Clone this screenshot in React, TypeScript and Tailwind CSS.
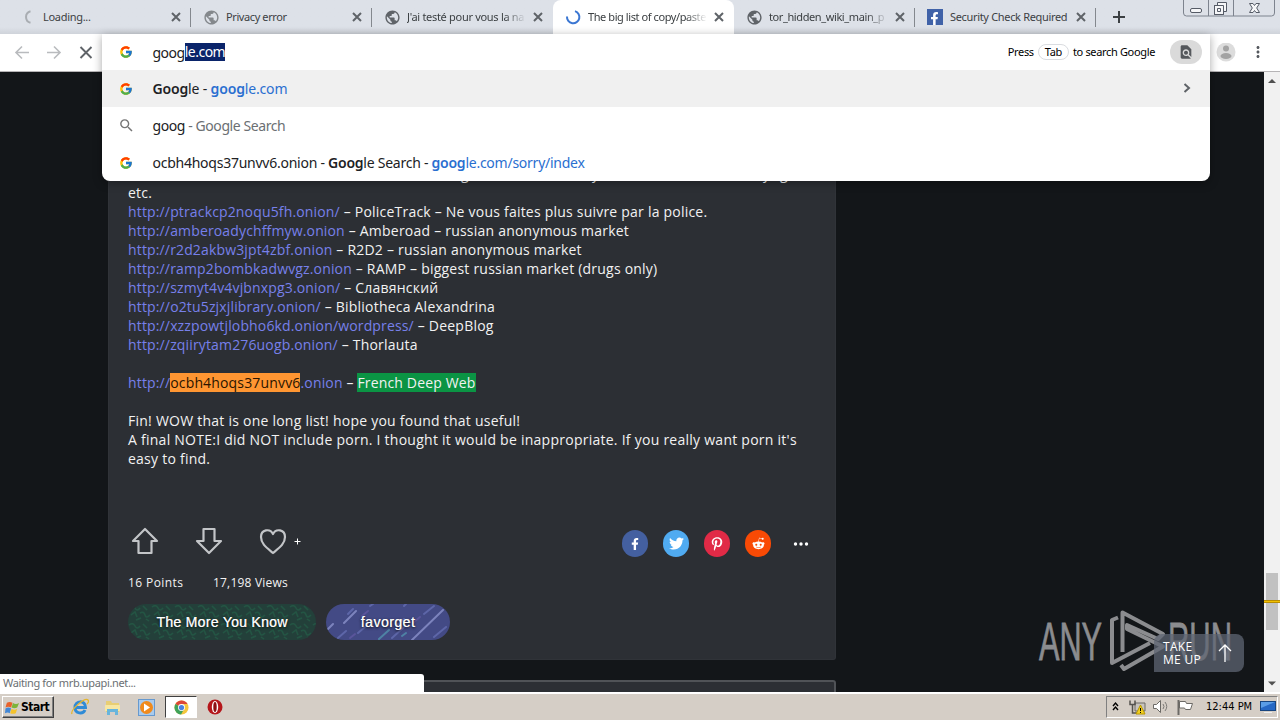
import type { ReactNode } from "react"
import clsx from "clsx"
import { FcGoogle } from "react-icons/fc"
import { FaFacebookF, FaPinterestP, FaRedditAlien, FaTwitter } from "react-icons/fa"
import { MdFindInPage, MdMoreVert, MdPublic, MdSearch } from "react-icons/md"

const UI = "font-['Noto_Sans','Open_Sans',sans-serif]"
const TAHOMA = "font-['DejaVu_Sans_Condensed','DejaVu_Sans',sans-serif]"

const TABS = [
  { icon: "wait", title: "Loading...", track: "tracking-[-0.3px]", dim: true },
  { icon: "globe", title: "Privacy error", track: "tracking-[-0.4px]", dim: true },
  { icon: "globe", title: "J'ai testé pour vous la na", track: "tracking-[-0.3px]", fade: true },
  { icon: "spin", title: "The big list of copy/paste", track: "tracking-[-0.42px]", fade: true, active: true },
  { icon: "globe", title: "tor_hidden_wiki_main_p", track: "tracking-[-0.4px]", fade: true },
  { icon: "fb", title: "Security Check Required", track: "tracking-[-0.33px]" },
]

const LINKS = [
  { url: "http://ptrackcp2noqu5fh.onion/", text: "PoliceTrack – Ne vous faites plus suivre par la police." },
  { url: "http://amberoadychffmyw.onion", text: "Amberoad – russian anonymous market" },
  { url: "http://r2d2akbw3jpt4zbf.onion", text: "R2D2 – russian anonymous market" },
  { url: "http://ramp2bombkadwvgz.onion", text: "RAMP – biggest russian market (drugs only)" },
  { url: "http://szmyt4v4vjbnxpg3.onion/", text: "Славянский" },
  { url: "http://o2tu5zjxjlibrary.onion/", text: "Bibliotheca Alexandrina" },
  { url: "http://xzzpowtjlobho6kd.onion/wordpress/", text: "DeepBlog" },
  { url: "http://zqiirytam276uogb.onion/", text: "Thorlauta" },
]

const SHARES = [
  { name: "facebook", bg: "bg-[#4460a0]", icon: <FaFacebookF size={12} /> },
  { name: "twitter", bg: "bg-[#50abf1]", icon: <FaTwitter size={15} /> },
  { name: "pinterest", bg: "bg-[#e12a46]", icon: <FaPinterestP size={14} /> },
  { name: "reddit", bg: "bg-[#f94a05]", icon: <FaRedditAlien size={13} /> },
]

function TabIcon({ type, dim }: { type: string; dim?: boolean }) {
  if (type === "globe")
    return <MdPublic size={17} className={clsx("-mr-px shrink-0", dim ? "text-[#84888c]" : "text-[#5f6368]")} />
  if (type === "fb")
    return (
      <span className="flex w-4 h-4 items-end justify-end bg-[#4062a8] pr-[2px] text-white">
        <FaFacebookF size={13} />
      </span>
    )
  return (
    <svg className={clsx("shrink-0", type === "wait" && "-ml-[2px]")} width="16" height="16" fill="none" strokeWidth="2">
      {type === "wait" ? (
        <path d="M10.500 2.200A6 6 0 0 0 10.500 13.800" stroke="#a9adb2" />
      ) : (
        <path d="M2 7.500A6.200 6.200 0 1 0 10 2.100" stroke="#3a76d2" />
      )}
    </svg>
  )
}

function Tab({ tab, divider }: { tab: (typeof TABS)[number]; divider: boolean }) {
  return (
    <div
      className={clsx(
        "relative flex h-full w-[181px] shrink-0 items-center justify-between pl-3 pr-[10px]",
        tab.active && "rounded-t-lg bg-white"
      )}
    >
      <TabIcon type={tab.icon} dim={tab.dim} />
      <div
        className={clsx(
          "ml-[7px] mr-auto w-[119px] overflow-hidden whitespace-nowrap text-[11px] text-[#3c4043]",
          tab.track,
          tab.fade && "[mask-image:linear-gradient(to_right,black_82%,transparent)]"
        )}
      >
        {tab.title}
      </div>
      <svg className="shrink-0" width="10" height="10" stroke="#5f6368" strokeWidth="2">
        <path d="M1 1l8 8M9 1L1 9" />
      </svg>
      {divider && <span className="absolute right-0 top-2 h-[19px] w-px bg-[#84888e]" />}
    </div>
  )
}

function WindowControls() {
  return (
    <svg className="absolute right-[4px] top-0" width="94" height="17" fill="none" stroke="#7d838e">
      <path d="M1.5 0v13q0 3 3 3h85q3 0 3-3V0M26.5 0v16M51.5 0v16" />
      <rect x="8.500" y="8.500" width="11" height="4" rx="1.500" fill="#f5f6f8" stroke="#555b66" />
      <path d="M35.500 2.500h9v9h-3v3h-9v-9h3z" fill="#f5f6f8" stroke="#555b66" />
      <path d="M32.500 5.500h9v9h-9zM35.500 8.500h3v3h-3z" stroke="#555b66" />
      <path d="M67.500 3.500h3.500l1.500 2 1.500-2h3.500l-2.800 4.500 2.800 4.500H74l-1.500-2-1.500 2h-3.500l2.800-4.500z" fill="#f5f6f8" stroke="#555b66" />
    </svg>
  )
}

function TabStrip() {
  return (
    <div className="relative flex h-[34px] shrink-0 bg-linear-to-b from-[#dde1e8] from-80% to-[#cfd3da] pl-[10px]">
      {TABS.map((t, i) => (
        <Tab key={t.title} tab={t} divider={i !== 2 && i !== 3} />
      ))}
      <svg className="ml-[17px] mt-[11px]" width="12" height="12" stroke="#3c4043" strokeWidth="2">
        <path d="M0 6h12M6 0v12" />
      </svg>
      <WindowControls />
    </div>
  )
}

function Toolbar() {
  return (
    <div className="flex h-[38px] shrink-0 items-center border-b border-[#b6b4b6] bg-white pl-[14px] pr-[12px]">
      <svg width="80" height="16" fill="none" strokeWidth="1.600">
        <path d="M15 7.500H2M8 1.500l-6 6 6 6" stroke="#b9bbbe" />
        <path d="M33 7.500h13M40 1.500l6 6-6 6" stroke="#b9bbbe" />
        <path d="M66.500 2l11 11M77.500 2l-11 11" stroke="#5f6368" strokeWidth="1.900" />
      </svg>
      <svg className="ml-auto" width="20" height="20">
        <circle cx="10" cy="9" r="9.500" fill="#dcdcdc" />
        <circle cx="10" cy="5.500" r="3" fill="#a3a3a3" />
        <ellipse cx="10" cy="13" rx="5.500" ry="3" fill="#a3a3a3" />
      </svg>
      <MdMoreVert size={18} className="mb-[2px] ml-[13px] mr-px text-[#55595e]" />
    </div>
  )
}

type RowProps = { icon: ReactNode; track: string; active?: boolean; children: ReactNode }

function Row({ icon, track, active, children }: RowProps) {
  return (
    <div className={clsx("flex h-[37px] items-center pl-[17px]", active && "bg-[#f0f0f0]")}>
      <span className="flex w-[14px] justify-center">{icon}</span>
      <span className={clsx("ml-[19.5px] whitespace-pre", track)}>{children}</span>
      {active && (
        <svg className="ml-auto mr-[19px]" width="8" height="12" fill="none" stroke="#5f6368" strokeWidth="2">
          <path d="M1.500 1l4.500 4-4.500 4" />
        </svg>
      )}
    </div>
  )
}

function Omnibox() {
  return (
    <div className="absolute left-[102px] top-[34px] z-10 w-[1108px] overflow-hidden rounded-b-lg bg-white text-[14px] tracking-[-0.5px] text-[#202124] shadow-[0_2px_10px_rgba(0,0,0,0.35)]">
      <div className="flex h-9 items-center pl-[17px] pr-2">
        <FcGoogle size={14} />
        <span className="ml-[19.5px]">goog</span>
        <span className="bg-[#0a246a] leading-[18px] text-white">le.com</span>
        <div className="ml-auto flex items-center text-[11px] tracking-[-0.34px] text-black">
          Press
          <span className="mx-1 h-4 rounded-full border border-[#dadce0] px-[6px] leading-[14px]">Tab</span>
          to search Google
        </div>
        <span className="ml-[15px] flex h-6 w-8 items-center justify-center rounded-full bg-[#dadada]">
          <MdFindInPage size={16} className="text-[#55585c]" />
        </span>
      </div>
      <Row active track="tracking-[-0.16px]" icon={<FcGoogle size={14} />}>
        <b className="font-semibold">Goog</b>le - <span className="text-[#2a6fd0]"><b className="font-semibold">goog</b>le.com</span>
      </Row>
      <Row track="tracking-[-0.42px]" icon={<MdSearch size={17} className="shrink-0 text-[#757575]" />}>
        goog <span className="text-[#6b6f73]">- Google Search</span>
      </Row>
      <Row track="tracking-[-0.25px]" icon={<FcGoogle size={14} />}>
        ocbh4hoqs37unvv6.onion - <b className="font-semibold">Goog</b>le Search - <span className="text-[#2a6fd0]"><b className="font-semibold">goog</b>le.com/sorry/index</span>
      </Row>
    </div>
  )
}

function PostText() {
  return (
    <div className="whitespace-pre text-[14px] leading-[19px] tracking-[0.24px] text-[#f2f2f2]">
      <div className="flex pl-[333px]">
        <span className="w-[131px]">g</span>
        <span className="w-[171px]">y</span>
        <span className="w-[17px]">y</span>
        <span>g</span>
      </div>
      <div>etc.</div>
      {LINKS.map(l => (
        <div key={l.url} className="tracking-[0.22px]">
          <span className="tracking-[0.15px] text-[#7780ea]">{l.url}</span> – {l.text}
        </div>
      ))}
      <div className="mt-[19px] flex tracking-[0.16px]">
        <span className="text-[#7780ea]">http://</span>
        <span className="bg-[#ff9632] text-[#2b1500]">ocbh4hoqs37unvv6</span>
        <span className="text-[#7780ea]">.onion</span> – <span className="bg-[#0b9444]">French Deep Web</span>
      </div>
      <div className="mt-[19px]">Fin! WOW that is one long list! hope you found that useful!</div>
      <div className="tracking-[0.255px]">A final NOTE:I did NOT include porn. I thought it would be inappropriate. If you really want porn it's</div>
      <div>easy to find.</div>
    </div>
  )
}

function Actions() {
  return (
    <div className="mt-[59px] flex h-7 items-center">
      <svg width="175" height="28" fill="none" stroke="#c3c5c8" strokeWidth="2.200" strokeLinejoin="round">
        <path d="M17 2L5 14h5.500v12h13V14H29z" />
        <path d="M75.500 2h11v12H93L81 26 69 14h6.500z" />
        <path d="M145 26C139 21 133 17 133 10c0-7.500 9-9 12-3 3-6 12-4.500 12 3 0 7-6 11-12 16z" />
        <path d="M166.500 14.500h6M169.500 11.500v6" strokeWidth="1" stroke="#fff" />
      </svg>
      <div className="ml-auto flex items-center gap-[15px] pt-[5px]">
        {SHARES.map(s => (
          <span key={s.name} className={clsx("flex h-[27px] w-[26px] items-center justify-center rounded-full text-white", s.bg)}>
            {s.icon}
          </span>
        ))}
      </div>
      <svg className="ml-[22px] mr-[7px] mt-[5px]" width="16" height="4" fill="#fff">
        <circle cx="2.500" cy="2" r="1.700" />
        <circle cx="8" cy="2" r="1.700" />
        <circle cx="13.500" cy="2" r="1.700" />
      </svg>
    </div>
  )
}

function Tags() {
  return (
    <div className="mt-3 flex gap-[10px] font-['Liberation_Sans',sans-serif] text-[14px] text-white">
      <div className="relative flex h-9 w-[188px] items-center justify-center overflow-hidden rounded-full bg-[#23403a]">
        <svg className="absolute inset-0" width="188" height="36" fill="none" stroke="#23634a" strokeWidth="1.500">
          <defs>
            <pattern id="squiggle" width="23" height="18" patternUnits="userSpaceOnUse">
              <path d="M1 3q4-3 6 1t5 0M15 2l4 4M3 11l4-3 2 5M12 9q4-2 5 2t5 0M8 16l5-2M18 15l3 2" opacity="0.600" />
            </pattern>
          </defs>
          <rect width="188" height="36" fill="url(#squiggle)" stroke="none" />
        </svg>
        <span className="relative tracking-[0.300px] [text-shadow:0_1px_3px_#000,0.4px_0_0_#fff]">The More You Know</span>
      </div>
      <div className="relative flex h-9 w-[124px] items-center justify-center overflow-hidden rounded-full bg-[#434a85]">
        <svg className="absolute inset-0" width="124" height="36" fill="none" strokeWidth="2" strokeLinecap="round">
          <path d="M18 19L30 7M86 36L117 6M2 25l5-5" stroke="#7c83bd" />
          <path d="M22 10l5-5M32 29l8-7M44 2l3-2M78 2l2-2M66 34l12-11M70 22l8-7M98 10l10-8M108 33l12-10M12 34l8-7" stroke="#5d66a8" />
          <path d="M53 35l10-9M76 32l4-3" stroke="#4e82a4" />
          <path d="M36 12l6-5M24 34l5-4M88 18l6-5" stroke="#5a559b" />
        </svg>
        <span className="relative tracking-[0.500px] [text-shadow:0_1px_3px_#000,0.4px_0_0_#fff]">favorget</span>
      </div>
    </div>
  )
}

function Watermark() {
  return (
    <svg className="absolute right-[48px] top-[530px]" width="196" height="76" fill="none" stroke="#8b8c8f">
      <g fill="#8b8c8f" strokeWidth="0.800" className="font-['Liberation_Sans_Narrow','Liberation_Sans',sans-serif] text-[54px]">
        <text x="3" y="57.500" textLength="63" lengthAdjust="spacingAndGlyphs">ANY</text>
        <text x="132" y="57.500" textLength="64" lengthAdjust="spacingAndGlyphs">RUN</text>
      </g>
      <g strokeWidth="4" strokeLinejoin="round">
        <path d="M86.500 50V10.500L127 32l-5 5-31-14v4L127 44.500 88 67l-3-4" />
        <path d="M82 15.500L76 18v43l38-20" />
      </g>
    </svg>
  )
}

function TakeMeUp() {
  return (
    <div className="absolute right-[36px] top-[562px] flex h-[38px] w-[90px] items-center rounded-r-lg rounded-tl-lg bg-[#5f6573]/75 pl-[9px] text-[12px] leading-[13px] tracking-[0.3px] text-white">
      <div>
        TAKE
        <br />
        ME UP
      </div>
      <svg className="ml-auto mr-3" width="14" height="20" fill="none" stroke="#fff" strokeWidth="1.300">
        <path d="M7 19V2M1 8l6-6 6 6" />
      </svg>
    </div>
  )
}

function Scrollbar() {
  return (
    <div className="flex w-4 shrink-0 flex-col bg-[#f1f1f1]">
      <svg width="16" height="620">
        <path d="M4 11l4-4 4 4z" fill="#505050" />
        <rect x="2" y="501" width="12" height="57" fill="#c1c1c1" />
        <path d="M0 529.500h16" stroke="#b98c00" strokeWidth="3" />
        <path d="M0 529.500h16" stroke="#f0c000" />
        <path d="M4 609.500l4 4 4-4z" fill="#505050" />
      </svg>
    </div>
  )
}

function Page() {
  return (
    <div className="relative flex h-[620px] shrink-0 overflow-hidden bg-[#131619] font-['Open_Sans','Noto_Sans',sans-serif]">
      <div className="flex-1 pl-[108px]">
        <div className="h-[588px] w-[728px] rounded-b-[3px] border border-t-0 border-[#303338] bg-[#2c2f34] px-[19px] pt-[92px]">
          <PostText />
          <Actions />
          <div className="mt-[19px] flex h-[18px] items-center gap-[30px] text-[12px] tracking-[0.2px] text-[#f2f2f2]">
            <span className="w-[55px] whitespace-nowrap tracking-[0.4px]">16 Points</span>
            <span>17,198 Views</span>
          </div>
          <Tags />
        </div>
        <div className="mt-5 h-6 w-[728px] rounded-t-[3px] border-2 border-[#505357] bg-[#2c2f34]" />
      </div>
      <Watermark />
      <TakeMeUp />
      <Scrollbar />
      <div className={clsx("absolute bottom-0 left-0 h-[18px] w-[424px] rounded-tr-[3px] bg-white pl-[3px] text-[11px] leading-[18px] tracking-[-0.36px] text-[#6b6f73]", UI)}>
        Waiting for mrb.upapi.net...
      </div>
    </div>
  )
}

function Taskbar() {
  return (
    <div className={clsx("flex h-7 shrink-0 items-center border-t-2 border-white bg-[#d5cec6] pl-[2px] text-[11px] text-black", TAHOMA)}>
      <div className="flex h-[22px] w-[52px] items-center border border-b-[#404040] border-l-white border-r-[#404040] border-t-white pl-[2px] shadow-[inset_-1px_-1px_#808080]">
        <svg width="15" height="15" viewBox="0 0 16 16">
          <path d="M2 3q3-2 6 0L6.500 8q-3-1.500-6 0z" fill="#e8622b" />
          <path d="M8.500 3.300q3 2 6.500 0L13 8q-3 1.600-6 0z" fill="#7db43a" />
          <path d="M.500 9q3-2 6 0L5 14q-2-1.500-5 0z" fill="#4287d6" />
          <path d="M7 9.300q3 2 6 0L11.500 14q-3 1.500-6 0z" fill="#f5c32c" />
        </svg>
        <span className="ml-px text-[12px] font-bold tracking-[-0.500px]">Start</span>
      </div>
      {/* quick launch */}
      <svg className="ml-[17px]" width="18" height="18" viewBox="0 0 18 18" fill="none">
        <path d="M4.500 9.500h10c0-8-10.500-7-10.500 0 0 6.500 8 7 10 2.500" stroke="#2f8bd6" strokeWidth="3" />
        <path d="M1 16C-1 12 14-1 17 2c1 1 0 3-1 4" stroke="#e5b62e" strokeWidth="1.300" />
      </svg>
      <svg className="ml-[15px]" width="17" height="17" viewBox="0 0 17 17">
        <path d="M2 2h5l1 2h7v9H2z" fill="#e8ce73" />
        <path d="M1 6h15v6H1z" fill="#f7e7a2" />
        <path d="M3 16V10h11v6h-3v-3H6v3z" fill="#68b5dc" />
      </svg>
      <svg className="ml-[17px]" width="17" height="17">
        <rect x="0.500" y="0.500" width="16" height="16" fill="#a9cbed" stroke="#6699cf" />
        <circle cx="8.500" cy="8.500" r="6.500" fill="#f08a1c" />
        <path d="M6 4.500l6 4-6 4z" fill="#fff" />
      </svg>
      <div className="ml-[10px] flex h-[22px] w-8 items-center justify-center border border-b-white border-l-[#404040] border-r-white border-t-[#404040] bg-white">
        <svg width="15" height="15" viewBox="0 0 16 16">
          <circle cx="8" cy="8" r="7.500" fill="#f4c63d" />
          <path d="M8 8L1.500 4.300A7.500 7.500 0 0 1 14.500 4.300H8z" fill="#dc4738" />
          <path d="M1.500 4.300A7.500 7.500 0 0 0 7.500 15.500L10.500 10 8 8z" fill="#3fa25a" />
          <circle cx="8" cy="8" r="3.700" fill="#fff" />
          <circle cx="8" cy="8" r="2.800" fill="#4a82e0" />
        </svg>
      </div>
      <svg className="ml-[10px]" width="16" height="16">
        <circle cx="8" cy="8" r="7.500" fill="#b5161b" />
        <ellipse cx="8" cy="8" rx="3.200" ry="6" fill="#fff" />
        <ellipse cx="8" cy="8" rx="1.700" ry="5" fill="#8e1014" />
      </svg>
      {/* tray */}
      <div className="ml-auto mr-[2px] flex h-[22px] w-[172px] items-center border border-b-white border-l-[#808080] border-r-white border-t-[#808080] pl-1">
        <svg width="84" height="18" fill="none">
          <path d="M2 8l2.500-3L7 8M2 12l2.500-3L7 12" stroke="#000" strokeWidth="1.400" />
          <path d="M24 5h10v8H24z" fill="#c8c4be" stroke="#6c6a66" />
          <path d="M19 2.500v4h5v-4M21.500 6v9h5" stroke="#55534f" strokeWidth="1.500" />
          <path d="M29.500 7l4.500 9h-9z" fill="#f2cf1f" stroke="#b89600" />
          <path d="M29.500 10v3M29.500 14v1" stroke="#000" />
          <path d="M42.500 6.500h3l4-4v12l-4-4h-3z" fill="#fff" stroke="#6c6a66" />
          <path d="M52 6q2 2.500 0 5M54 4q3.500 4.500 0 9" stroke="#7c7a76" />
          <path d="M67.500 2v15" stroke="#6c6a66" strokeWidth="2" />
          <path d="M68.500 3.500h6l1 2h6l-2 6h-5l-1-1.500h-5z" fill="#fff" stroke="#6c6a66" />
        </svg>
        <span className="ml-[11px] whitespace-nowrap pt-px">12:44 PM</span>
        <svg className="ml-[8px] shrink-0" width="16" height="14">
          <rect x="0.500" y="1.500" width="15" height="9" fill="#2668c4" stroke="#17457f" />
          <path d="M1 2h14L1 8z" fill="#5a9de6" />
          <path d="M4 12.500h8" stroke="#eee" />
        </svg>
      </div>
    </div>
  )
}

export default function App() {
  return (
    <div className={clsx("relative flex h-[720px] w-[1280px] flex-col overflow-hidden", UI)}>
      <TabStrip />
      <Toolbar />
      <Page />
      <Taskbar />
      <Omnibox />
    </div>
  )
}
